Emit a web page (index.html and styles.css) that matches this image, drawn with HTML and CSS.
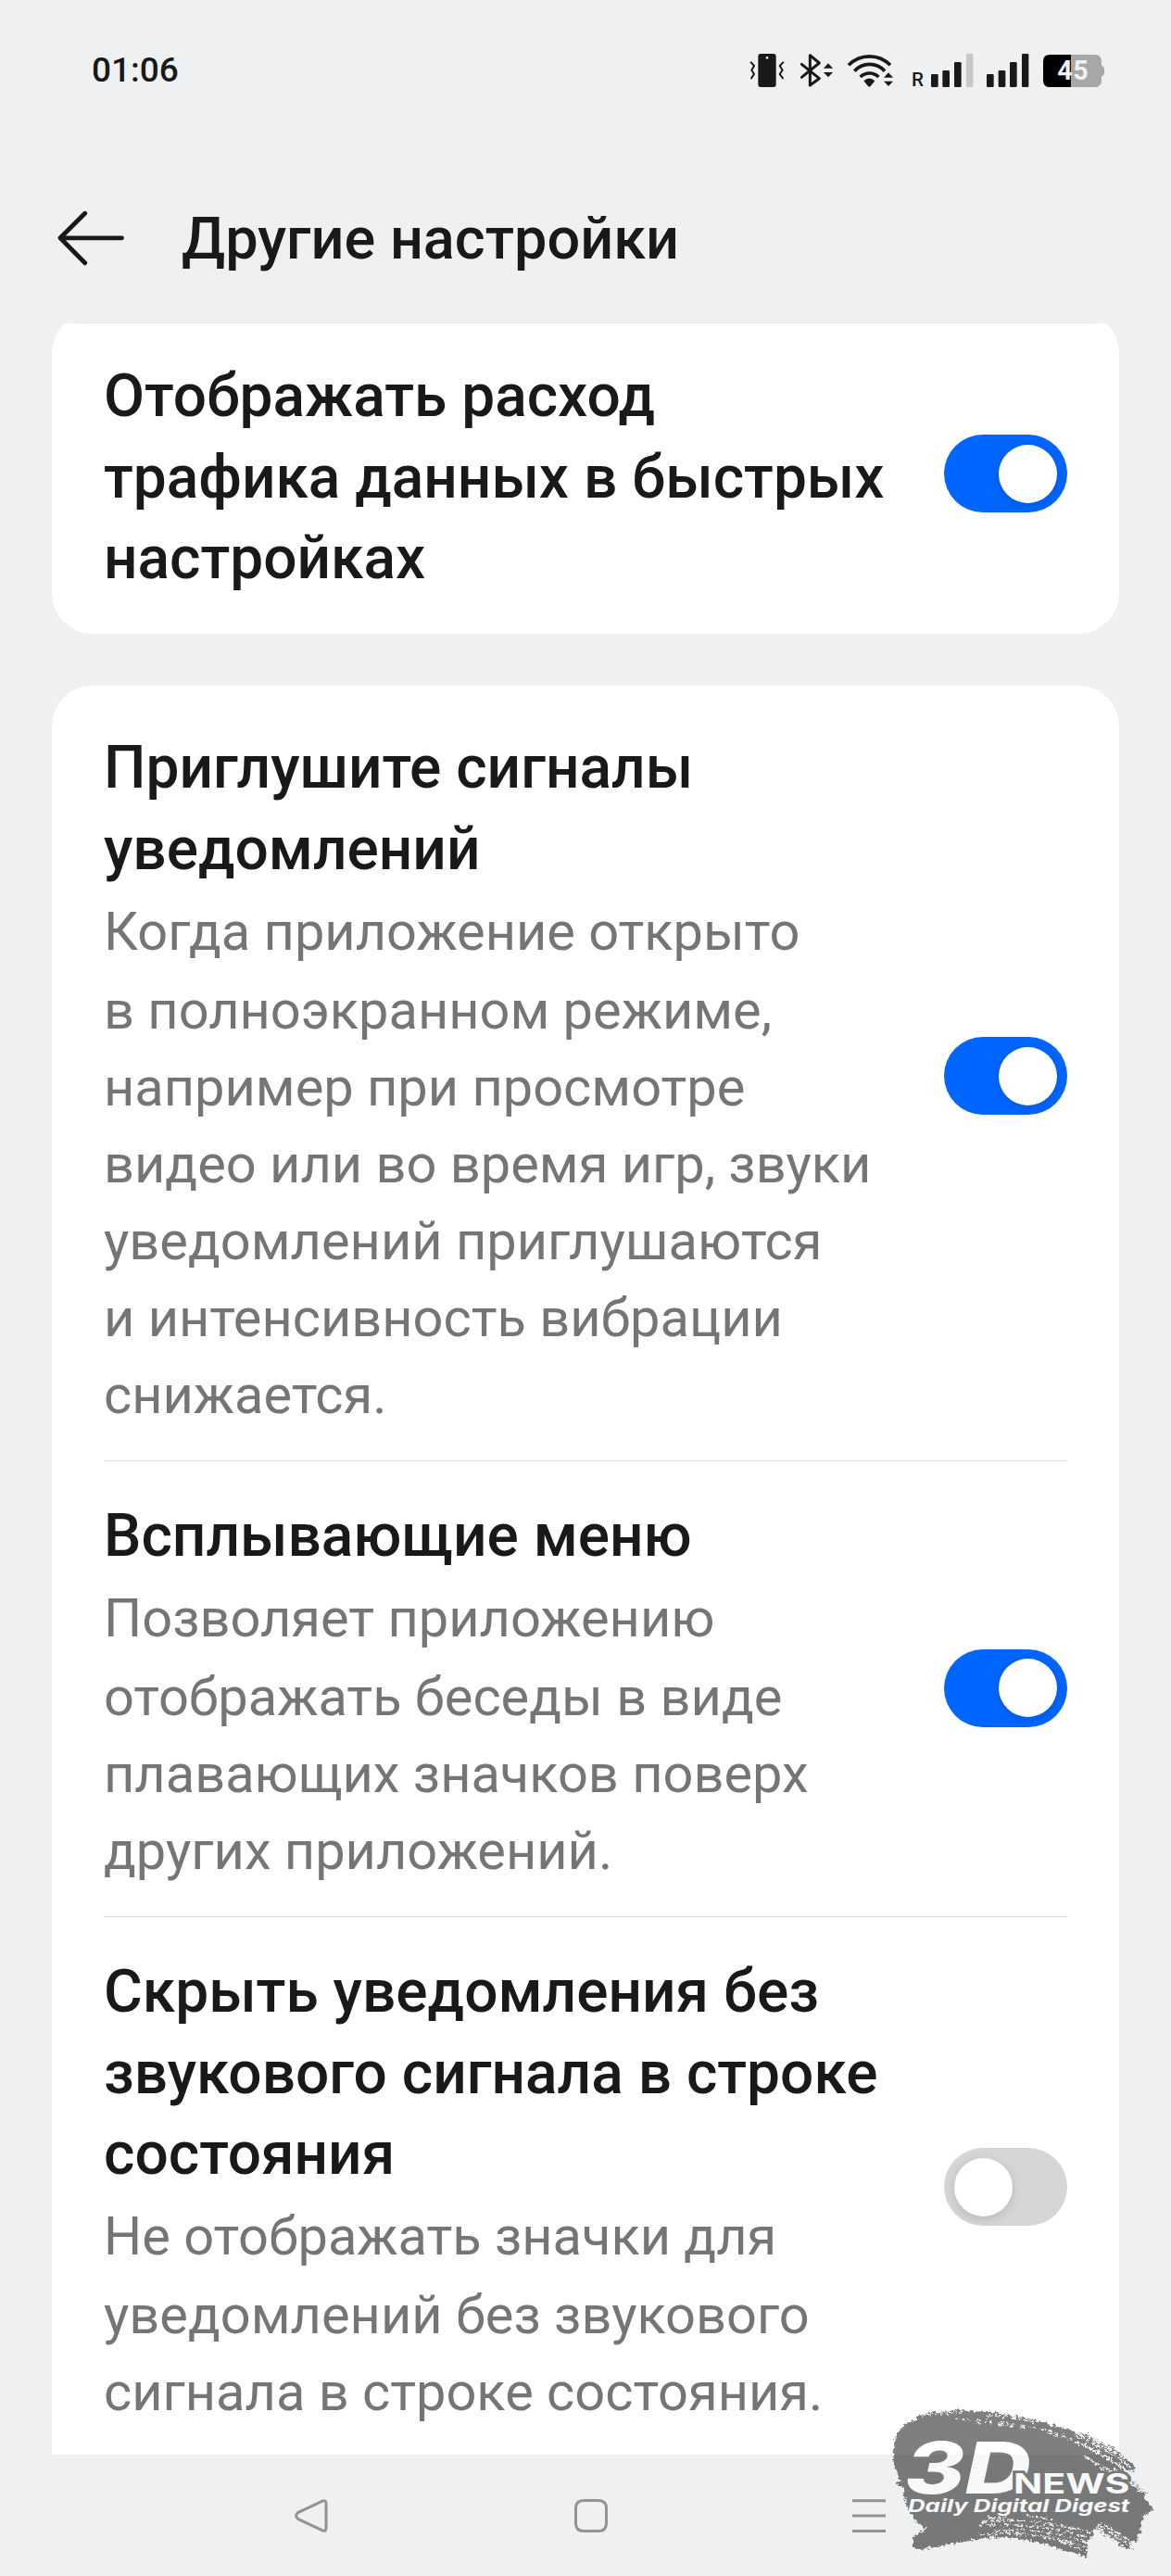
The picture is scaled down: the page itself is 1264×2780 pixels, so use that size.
FILE: index.html
```
<!DOCTYPE html>
<html lang="ru">
<head>
<meta charset="utf-8">
<title>Другие настройки</title>
<link rel="stylesheet" href="styles.css">
</head>
<body>
<div class="screen">
  <div class="status">
    <span class="clock">01:06</span>
    <div class="status-icons">
      <svg class="i-vibrate" viewBox="57 48 114 120">
        <rect x="85" y="54" width="58" height="108" rx="9"/>
        <circle cx="114" cy="67" r="4" class="bg-fill"/>
        <path class="line thin" d="M62 82l10 11-8 14 8 13-9 13M166 82l-11 11 9 14-9 13 10 13"/>
      </svg>
      <svg class="i-bt" viewBox="219 48 111 120">
        <path class="line" d="M226 88L283 134L253 156V59L283 84L226 130"/>
        <path d="M312 85l15 16h-30zM312 130l15-16h-30z"/>
      </svg>
      <svg class="i-wifi" viewBox="372 48 153 120">
        <path class="line arc" d="M378 91A94 94 0 0 1 513 91M397 110A66 66 0 0 1 495 110M416 129A42 42 0 0 1 475 129"/>
        <path d="M427 142Q445 125 463 142L449 159Q445 163 441 159z"/>
        <path d="M507 115l15 16h-30zM507 159l15-16h-30z"/>
      </svg>
      <svg class="i-sig-r" viewBox="582 48 201 120">
        <text class="roaming" x="582" y="160">R</text>
        <rect x="645" y="120" width="23" height="42" rx="4"/>
        <rect x="682" y="108" width="23" height="54" rx="4"/>
        <rect x="720" y="81" width="23" height="81" rx="4"/>
        <rect x="759" y="54" width="22" height="108" rx="4" class="off"/>
      </svg>
      <svg class="i-sig" viewBox="822 48 141 120">
        <rect x="825" y="120" width="23" height="42" rx="4"/>
        <rect x="863" y="108" width="23" height="54" rx="4"/>
        <rect x="900" y="81" width="23" height="81" rx="4"/>
        <rect x="939" y="54" width="22" height="108" rx="4"/>
      </svg>
      <svg class="i-bat" viewBox="1005 48 204 120">
        <path class="bat-rest" d="M1098 57H1175Q1197 57 1197 79V92Q1206 95 1206 104V115Q1206 124 1197 127V140Q1197 162 1175 162H1098z"/>
        <path class="bat-level" d="M1098 57H1030Q1008 57 1008 79V140Q1008 162 1030 162H1098z"/>
        <text class="bat-text" x="1054" y="139" textLength="100">45</text>
      </svg>
    </div>
  </div>

  <header class="header">
    <svg class="back" viewBox="0 0 74 60"><path d="M70.5 29.8H4M30.7 3.3L4 29.8L30.7 56.7"/></svg>
    <h1>Другие настройки</h1>
  </header>
  <div class="header-line"></div>

  <main class="content">
    <section class="card card-top">
      <div class="row">
        <div class="text"><h2>Отображать расход<br>трафика данных в быстрых<br>настройках</h2></div>
        <div class="toggle on"><span></span></div>
      </div>
    </section>
    <section class="card card-main">
      <div class="row">
        <div class="text">
          <h2>Приглушите сигналы<br>уведомлений</h2>
          <p>Когда приложение открыто<br>в полноэкранном режиме,<br>например при просмотре<br>видео или во время игр, звуки<br>уведомлений приглушаются<br>и интенсивность вибрации<br>снижается.</p>
        </div>
        <div class="toggle on"><span></span></div>
      </div>
      <div class="row">
        <div class="text">
          <h2>Всплывающие меню</h2>
          <p>Позволяет приложению<br>отображать беседы в виде<br>плавающих значков поверх<br>других приложений.</p>
        </div>
        <div class="toggle on"><span></span></div>
      </div>
      <div class="row">
        <div class="text">
          <h2>Скрыть уведомления без<br>звукового сигнала в строке<br>состояния</h2>
          <p>Не отображать значки для<br>уведомлений без звукового<br>сигнала в строке состояния.</p>
        </div>
        <div class="toggle"><span></span></div>
      </div>
    </section>
  </main>

  <nav class="nav">
    <svg class="nav-back" viewBox="0 0 36 36"><path d="M29.5 2.3L3.6 14.6Q-.4 18 3.6 21.4L29.5 33.7Q34 35.5 34 31V5Q34 .5 29.5 2.3z"/></svg>
    <svg class="nav-home" viewBox="0 0 36 36"><path d="M10 1.5H26Q34.5 1.5 34.5 10V26Q34.5 34.5 26 34.5H10Q1.5 34.5 1.5 26V10Q1.5 1.5 10 1.5z"/></svg>
    <svg class="nav-menu" viewBox="0 0 36 36"><path d="M0 1.8H36M0 18H36M0 34.4H36"/></svg>
  </nav>

  <svg class="watermark" viewBox="0 0 972 600">
    <defs>
      <filter id="rough" x="-5%" y="-5%" width="110%" height="110%">
        <feTurbulence type="fractalNoise" baseFrequency="0.09" numOctaves="3" seed="4" result="n"/>
        <feDisplacementMap in="SourceGraphic" in2="n" scale="22" xChannelSelector="R" yChannelSelector="G"/>
      </filter>
      <mask id="bristles" maskUnits="userSpaceOnUse" x="0" y="0" width="972" height="600">
        <rect width="972" height="600" fill="#fff"/>
        <g class="streaks">
          <path stroke-dasharray="9 7 22 10 4 12" d="M160 82Q230 70 300 73"/>
          <path stroke-dasharray="16 12 5 9 8 22" d="M270 92Q400 92 545 124M340 104Q440 108 500 122"/>
          <path stroke-dasharray="12 10 20 7" d="M380 80Q460 82 530 103M550 126L650 158"/>
          <path stroke-dasharray="26 5 14 7 40 6" d="M665 150Q760 180 845 252M660 164Q750 200 835 262M690 178Q760 212 850 278M668 140Q750 166 820 220"/>
          <path stroke-dasharray="20 8 34 9" d="M690 214Q790 262 890 330M740 250Q810 280 880 328M780 250Q840 275 890 318"/>
          <path stroke-dasharray="18 10 34 8 6 9" d="M360 424Q530 408 720 462M345 438Q520 420 715 478M400 453Q560 440 705 494M350 466Q530 448 700 508"/>
          <path stroke-dasharray="22 9 8 12" d="M380 412L440 408M500 404L600 420M560 474Q640 492 695 522"/>
          <path stroke-dasharray="30 6 18 8" d="M738 432L845 508M730 440L836 520M760 436L850 494"/>
        </g>
      </mask>
      <linearGradient id="ink" gradientUnits="userSpaceOnUse" x1="0" y1="0" x2="0" y2="600">
        <stop offset=".345" stop-color="#fff"/><stop offset=".345" stop-color="#f7f8f8"/>
      </linearGradient>
    </defs>
    <g filter="url(#rough)"><g mask="url(#bristles)">
      <path class="brush" d="M146 84L190 70L300 64L400 71L500 88L610 118L700 145L790 190L845 236L855 256L835 264L838 290L895 330L880 344L917 382L900 400L882 402L872 440L878 460L862 466L866 490L838 486L846 520L800 494L765 470L728 444L716 450L722 470L704 490L700 536L640 520L560 496L450 474L380 476L300 490L220 502L150 516L134 500L138 470L182 448L150 426L128 398L112 360L100 310L80 300L98 292L76 250L70 200L80 150L110 108L148 94z"/>
    </g></g>
    <text class="wm-3d" x="110" y="333" textLength="408" lengthAdjust="spacingAndGlyphs">3D</text>
    <text class="wm-news" x="462" y="333" textLength="376" lengthAdjust="spacingAndGlyphs">NEWS</text>
    <text class="wm-tag" x="120" y="392" textLength="718" lengthAdjust="spacingAndGlyphs">Daily Digital Digest</text>
  </svg>
</div>
</body>
</html>
```
FILE: styles.css
```
* { box-sizing: border-box; }

body {
  margin: 0;
  background: #eff0f2;
  color: #191919;
  font-family: Roboto, "Liberation Sans", sans-serif;
}

h1, h2, p { margin: 0; }
svg { display: block; flex: none; overflow: visible; }

.screen {
  position: relative;
  display: flex;
  flex-direction: column;
  width: 1264px;
  height: 2780px;
  overflow: hidden;
}

/* status bar */
.status {
  display: flex;
  align-items: center;
  justify-content: space-between;
  height: 152px;
  padding: 0 71px 0 99px;
}

.clock {
  font-size: 37px;
  font-weight: 500;
  line-height: 44px;
}

.status-icons { display: flex; }
.status-icons svg { height: 40px; fill: #191919; }
.status-icons .line {
  fill: none;
  stroke: #191919;
  stroke-width: 9;
  stroke-linecap: round;
  stroke-linejoin: round;
}
.status-icons .thin { stroke-width: 6; }
.status-icons .arc { stroke-width: 11; stroke-linecap: butt; }
.status-icons .bg-fill { fill: #eff0f2; }
.status-icons .off { fill: #c6c7c8; }
.i-vibrate { width: 38px; }
.i-bt { width: 37px; margin-left: 16px; }
.i-wifi { width: 51px; margin-left: 14px; }
.i-sig-r { width: 67px; margin-left: 19px; }
.i-sig { width: 47px; margin-left: 13px; }
.i-bat { width: 68px; margin-left: 14px; }
.roaming { font-size: 62px; font-weight: 500; }
.bat-rest { fill: #a7a7a7; }
.bat-level { fill: #000; }
.bat-text { fill: #f0f0f2; font-size: 86px; font-weight: 700; }

/* title bar */
.header {
  display: flex;
  align-items: center;
  gap: 61px;
  height: 196px;
  padding: 14px 0 0 61px;
}

.back {
  width: 74px;
  height: 60px;
  fill: none;
  stroke: #191919;
  stroke-width: 4.8;
  stroke-linecap: round;
  stroke-linejoin: round;
}

h1 {
  padding-top: 2px;
  font-size: 63px;
  font-weight: 500;
  line-height: 76px;
}

.header-line {
  height: 1px;
  margin: 0 84px;
  background: #e6e7e9;
}

/* scrolled list */
.content {
  height: 2300px;
  padding: 0 56px;
  overflow: hidden;
}

.card {
  border-radius: 44px;
  background: #fff;
}

.card-top { margin-top: -12px; height: 347px; }
.card-top .row { height: 347px; padding: 47px 0 37px; }

.card-main {
  margin-top: 56px;
  padding-top: 7px;
  border-radius: 44px 44px 0 0;
}

.row {
  display: flex;
  align-items: center;
  justify-content: space-between;
  margin: 0 56px;
  padding: 38px 0 29px;
}

.card-main .row + .row {
  padding-top: 37px;
  border-top: 1px solid #dfdfdf;
}

.text { white-space: nowrap; }

h2 {
  font-size: 64px;
  font-weight: 500;
  line-height: 87.5px;
}

p {
  margin-top: 1.75px;
  color: #757575;
  font-size: 57.75px;
  line-height: 83px;
}

p::first-line { line-height: 87px; }

.toggle {
  display: flex;
  flex: none;
  align-items: center;
  width: 133px;
  height: 84px;
  margin-bottom: 9px;
  padding: 0 11px;
  border-radius: 42px;
  background: #d6d6d6;
}

.toggle span {
  width: 63px;
  height: 63px;
  border-radius: 50%;
  background: #fff;
  box-shadow: 0 3px 12px rgba(0, 0, 0, .14);
}

.toggle.on {
  justify-content: flex-end;
  background: #0066ff;
}

/* system navigation */
.nav {
  display: flex;
  align-items: center;
  height: 131px;
  padding-left: 318px;
}

.nav svg {
  width: 36px;
  height: 36px;
  fill: none;
  stroke: #929493;
  stroke-width: 3;
}

.nav-home { margin-left: 266px; }
.nav-menu { margin-left: 264px; }

/* site logo stamped over the corner */
.watermark {
  position: absolute;
  left: 940px;
  top: 2580px;
  width: 324px;
  height: 200px;
}

.brush { fill: rgba(0, 0, 0, .5); }
.streaks { fill: none; stroke: #000; stroke-width: 5; }

.wm-3d, .wm-news, .wm-tag {
  fill: url(#ink);
  font-family: Inter, "Liberation Sans", sans-serif;
}

.wm-3d { font-size: 232px; font-weight: 800; font-style: italic; }
.wm-news {
  font-size: 90px;
  font-weight: 700;
  paint-order: stroke;
  stroke: #787878;
  stroke-width: 16px;
}
.wm-tag { font-size: 58px; font-weight: 700; font-style: italic; }
```
